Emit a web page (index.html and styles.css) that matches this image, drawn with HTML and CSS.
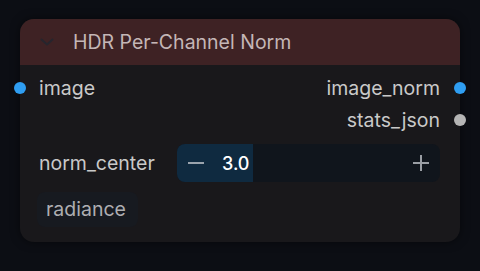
FILE: index.html
```html
<!DOCTYPE html>
<html>
<head>
<meta charset="utf-8">
<link rel="stylesheet" href="styles.css">
</head>
<body>
<div class="node">
  <div class="header">
    <svg class="chev" width="14" height="8" viewBox="0 0 14 8"><path d="M1.5 1.5 L7 6.5 L12.5 1.5" fill="none" stroke="#26252d" stroke-width="2" stroke-linecap="round" stroke-linejoin="round"/></svg>
    <span class="title">HDR Per-Channel Norm</span>
  </div>
  <div class="slots">
    <div class="row">
      <span class="dot in blue"></span>
      <span class="lbl">image</span>
      <span class="lbl right">image_norm</span>
      <span class="dot out blue"></span>
    </div>
    <div class="row">
      <span class="lbl right">stats_json</span>
      <span class="dot out grey"></span>
    </div>
  </div>
  <div class="widget-row">
    <span class="lbl">norm_center</span>
    <div class="num">
      <div class="fill"></div>
      <svg class="btn minus" width="18" height="18" viewBox="0 0 18 18"><path d="M1 9 H17" stroke="#9aa3ad" stroke-width="2"/></svg>
      <span class="val">3.0</span>
      <svg class="btn plus" width="18" height="18" viewBox="0 0 18 18"><path d="M1 9 H17 M9 1 V17" stroke="#9a9ea4" stroke-width="2"/></svg>
    </div>
  </div>
  <div class="chip-row">
    <span class="chip">radiance</span>
  </div>
</div>
</body>
</html>
```
FILE: styles.css
```css
html, body {
  margin: 0;
  padding: 0;
  background: #0c0e14;
  font-family: Inter, "Noto Sans", sans-serif;
}
body {
  padding: 19px 20px;
}
.node {
  width: 440px;
  background: #19181b;
  border-radius: 14px;
  box-shadow: 0 0 10px rgba(0,0,0,0.5);
  padding-bottom: 15px;
}
.header {
  height: 46px;
  background: #3e2224;
  border-radius: 14px 14px 0 0;
  display: flex;
  align-items: center;
  padding-left: 20px;
  box-sizing: border-box;
}
.chev {
  margin-top: 0;
}
.title {
  margin-left: 19px;
  color: #c4b6b6;
  font-size: 19.5px;
}
.slots {
  padding: 7px 20px 0 19px;
}
.row {
  position: relative;
  height: 32px;
  display: flex;
  align-items: center;
}
.lbl {
  color: #c9c9c9;
  font-size: 19.5px;
}
.right {
  margin-left: auto;
}
.dot {
  position: absolute;
  width: 12px;
  height: 12px;
  border-radius: 50%;
  top: 10px;
}
.dot.in { left: -25px; }
.dot.out { right: -26px; }
.blue { background: #2f9ef2; }
.grey { background: #b5b5b5; }
.widget-row {
  display: flex;
  align-items: center;
  padding: 8px 20px 0 19px;
}
.widget-row .lbl {
  width: 138px;
}
.num {
  position: relative;
  flex: 1;
  height: 38px;
  background: #10151c;
  border-radius: 8px;
  display: flex;
  align-items: center;
  padding: 0 10px;
  overflow: hidden;
}
.fill {
  position: absolute;
  left: 0;
  top: 0;
  bottom: 0;
  width: 76px;
  background: #0f2a40;
}
.btn { position: relative; }
.val {
  position: relative;
  margin-left: 17px;
  color: #ffffff;
  font-size: 18px;
  font-weight: 500;
}
.plus {
  margin-left: auto;
}
.chip-row {
  padding: 10px 0 0 17px;
}
.chip {
  display: inline-block;
  height: 35px;
  line-height: 35px;
  padding: 0 12px 0 9px;
  background: #171a20;
  border-radius: 8px;
  color: #aeaeb2;
  font-size: 19.5px;
}
```
